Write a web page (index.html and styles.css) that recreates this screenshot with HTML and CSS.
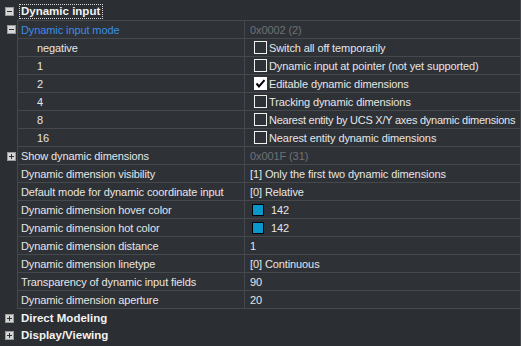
FILE: index.html
```html
<!DOCTYPE html>
<html>
<head>
<meta charset="utf-8">
<link rel="stylesheet" href="styles.css">
</head>
<body>
<div class="grid">
  <div class="cat first">
    <span class="exp"><span class="h"></span></span>
    <span class="cat-label focus">Dynamic input</span>
  </div>
  <div class="group">
    <div class="row top">
      <div class="gut"><span class="exp"><span class="h"></span></span></div>
      <div class="name sel">Dynamic input mode</div>
      <div class="val dim">0x0002 (2)</div>
    </div>
    <div class="row">
      <div class="gut"></div>
      <div class="name sub">negative</div>
      <div class="val"><span class="cb"></span>Switch all off temporarily</div>
    </div>
    <div class="row">
      <div class="gut"></div>
      <div class="name sub">1</div>
      <div class="val"><span class="cb"></span>Dynamic input at pointer (not yet supported)</div>
    </div>
    <div class="row">
      <div class="gut"></div>
      <div class="name sub">2</div>
      <div class="val"><span class="cb on"><svg viewBox="0 0 13 13" width="13" height="13"><path d="M2.5 6.5 L5 9.5 L10.5 3.2" fill="none" stroke="#000" stroke-width="2"/></svg></span>Editable dynamic dimensions</div>
    </div>
    <div class="row">
      <div class="gut"></div>
      <div class="name sub">4</div>
      <div class="val"><span class="cb"></span>Tracking dynamic dimensions</div>
    </div>
    <div class="row">
      <div class="gut"></div>
      <div class="name sub">8</div>
      <div class="val tight"><span class="cb"></span>Nearest entity by UCS X/Y axes dynamic dimensions</div>
    </div>
    <div class="row">
      <div class="gut"></div>
      <div class="name sub">16</div>
      <div class="val"><span class="cb"></span>Nearest entity dynamic dimensions</div>
    </div>
    <div class="row">
      <div class="gut"><span class="exp"><span class="h"></span><span class="v"></span></span></div>
      <div class="name">Show dynamic dimensions</div>
      <div class="val dim">0x001F (31)</div>
    </div>
    <div class="row">
      <div class="gut"></div>
      <div class="name">Dynamic dimension visibility</div>
      <div class="val">[1] Only the first two dynamic dimensions</div>
    </div>
    <div class="row">
      <div class="gut"></div>
      <div class="name">Default mode for dynamic coordinate input</div>
      <div class="val">[0] Relative</div>
    </div>
    <div class="row">
      <div class="gut"></div>
      <div class="name">Dynamic dimension hover color</div>
      <div class="val"><span class="swatch"></span>142</div>
    </div>
    <div class="row">
      <div class="gut"></div>
      <div class="name">Dynamic dimension hot color</div>
      <div class="val"><span class="swatch"></span>142</div>
    </div>
    <div class="row">
      <div class="gut"></div>
      <div class="name">Dynamic dimension distance</div>
      <div class="val">1</div>
    </div>
    <div class="row">
      <div class="gut"></div>
      <div class="name">Dynamic dimension linetype</div>
      <div class="val">[0] Continuous</div>
    </div>
    <div class="row">
      <div class="gut"></div>
      <div class="name">Transparency of dynamic input fields</div>
      <div class="val">90</div>
    </div>
    <div class="row">
      <div class="gut"></div>
      <div class="name">Dynamic dimension aperture</div>
      <div class="val">20</div>
    </div>
  </div>
  <div class="cat">
    <span class="exp"><span class="h"></span><span class="v"></span></span>
    <span class="cat-label">Direct Modeling</span>
  </div>
  <div class="cat short">
    <span class="exp"><span class="h"></span><span class="v"></span></span>
    <span class="cat-label">Display/Viewing</span>
  </div>
</div>
</body>
</html>
```

FILE: styles.css
```css
html, body {
  margin: 0;
  padding: 0;
  background: #2b2e32;
}

.grid {
  width: 520px;
  height: 344px;
  border-right: 1px solid #45484d;
  border-bottom: 1px solid #45484d;
  padding-top: 2px;
  box-sizing: content-box;
  background: #2b2e32;
  font-family: "Liberation Sans", Arial, sans-serif;
  font-size: 11px;
  letter-spacing: -0.1px;
  color: #e6e6e6;
  display: flex;
  flex-direction: column;
}

.cat {
  height: 18px;
  display: flex;
  align-items: center;
  padding-left: 5px;
}

.cat.short {
  height: 17px;
}

.cat .exp {
  margin-right: 5px;
}

.cat-label {
  font-weight: bold;
  font-size: 11.5px;
  letter-spacing: 0;
  color: #f2f2f2;
  padding: 0 2px 0 1px;
  border: 1px dotted transparent;
  line-height: 13px;
}

.cat-label.focus {
  border-color: #d8d8d8;
}

.exp {
  position: relative;
  display: inline-block;
  width: 9px;
  height: 9px;
  box-sizing: border-box;
  background: #d6d6d6;
  border: 1px solid #9a9a9a;
  flex: none;
}

.exp .h {
  position: absolute;
  left: 1px;
  top: 3px;
  width: 5px;
  height: 1px;
  background: #303030;
}

.exp .v {
  position: absolute;
  left: 3px;
  top: 1px;
  width: 1px;
  height: 5px;
  background: #303030;
}

.group {
  display: flex;
  flex-direction: column;
}

.row {
  display: grid;
  grid-template-columns: 17px 228px 1fr;
  height: 18px;
}

.row.top {
  height: 19px;
}

.row.top .name,
.row.top .val {
  border-top: 1px solid #45484d;
}

.gut {
  display: flex;
  align-items: center;
  padding-left: 7px;
}

.name,
.val {
  background: #2e3136;
  border-bottom: 1px solid #45484d;
  display: flex;
  align-items: center;
  white-space: nowrap;
  overflow: hidden;
}

.name {
  border-left: 1px solid #45484d;
  border-right: 1px solid #45484d;
  padding-left: 3px;
}

.name.sub {
  padding-left: 19px;
}

.name.sel {
  color: #3a8ee6;
}

.val {
  padding-left: 5px;
}

.val.tight {
  letter-spacing: -0.25px;
}

.val.dim {
  color: #6e7176;
}

.cb {
  display: inline-block;
  width: 13px;
  height: 13px;
  box-sizing: border-box;
  border: 1px solid #f0f0f0;
  margin-left: 4px;
  margin-right: 2px;
  flex: none;
}

.cb.on {
  background: #ffffff;
  border: none;
}

.cb svg {
  display: block;
}

.swatch {
  display: inline-block;
  width: 12px;
  height: 12px;
  box-sizing: border-box;
  border: 1px solid #000;
  background: #0a98cc;
  margin-left: 2px;
  margin-right: 7px;
  flex: none;
}
```
